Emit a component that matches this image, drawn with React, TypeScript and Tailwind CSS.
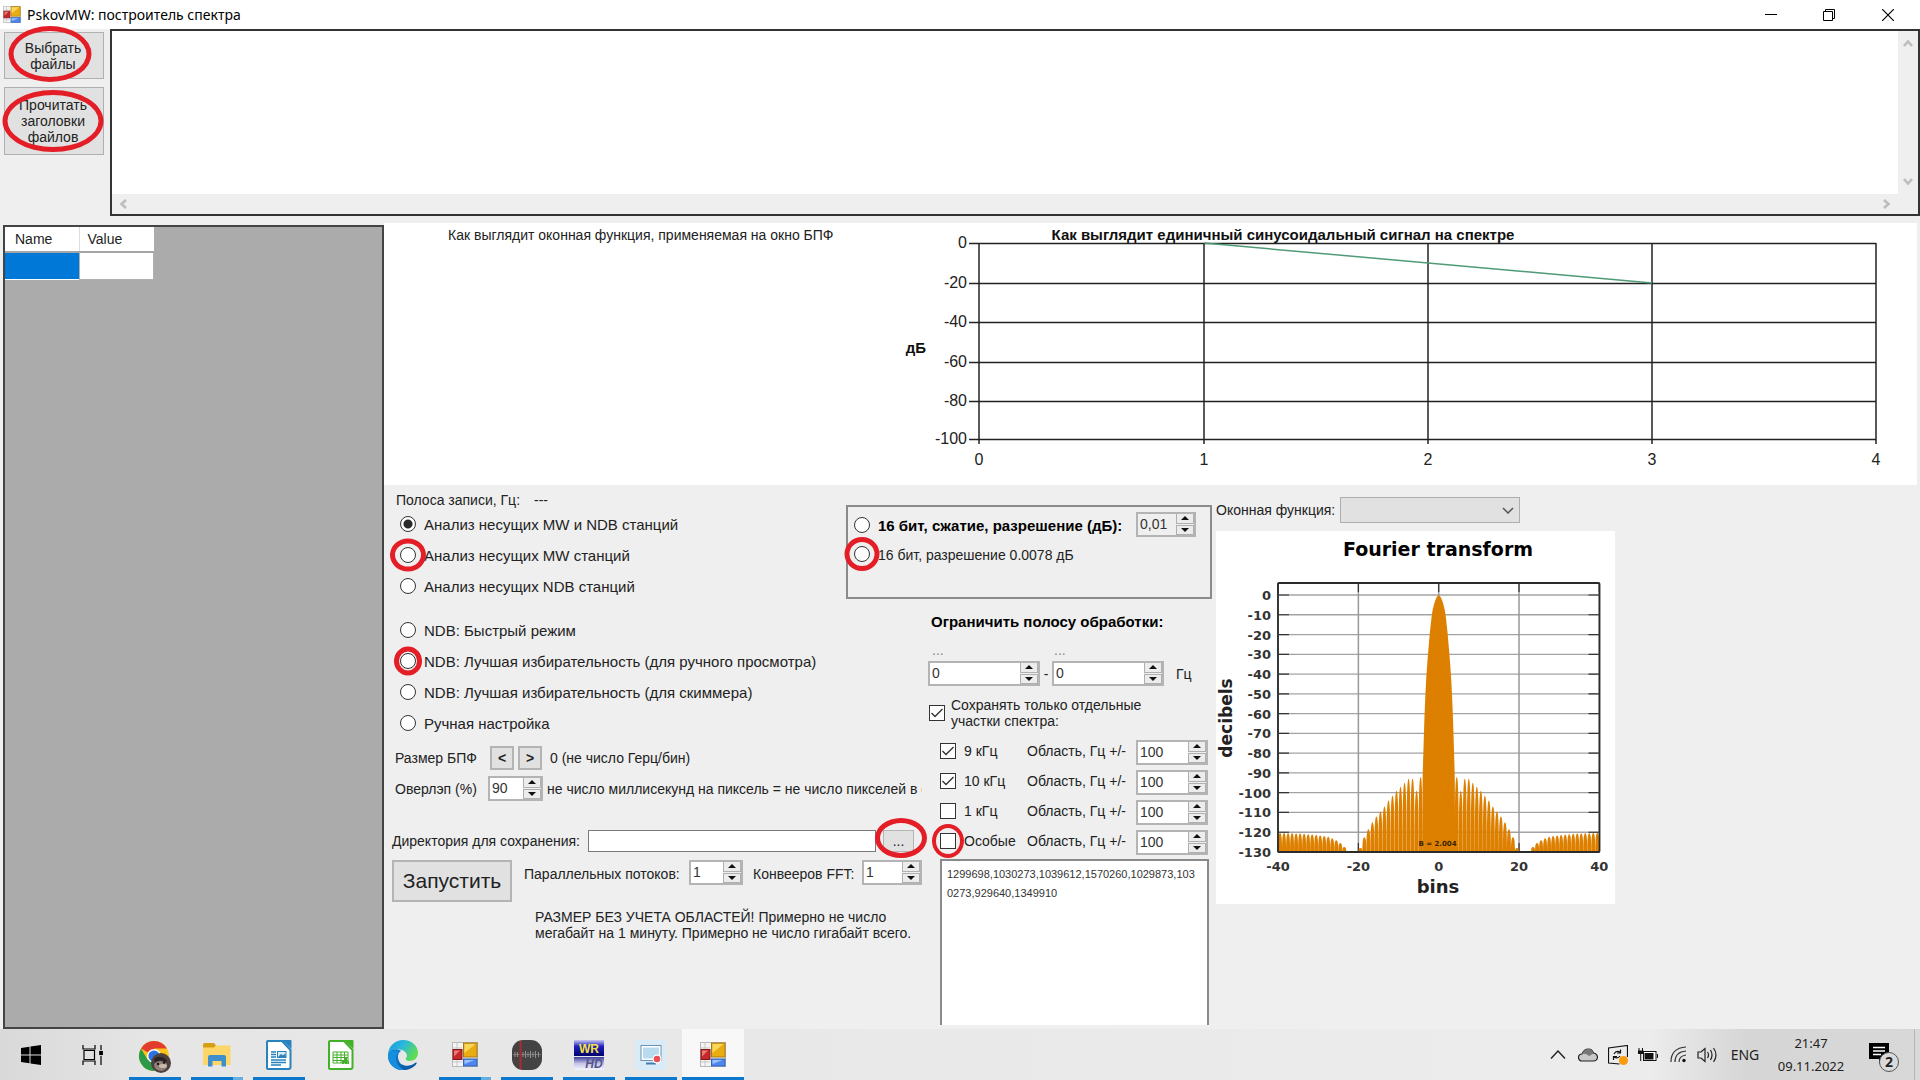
import React from "react";

const UI = "font-['Liberation_Sans',Arial,sans-serif]";

function Ring({ size }: { size: string }) {
  return (
    <span
      aria-hidden="true"
      className={`pointer-events-none absolute left-1/2 top-1/2 z-10 -translate-x-1/2 -translate-y-1/2 rounded-[50%] border-[#e41e26] ${size}`}
    />
  );
}

function FormsIcon({ className }: { className: string }) {
  return (
    <svg viewBox="0 0 26 25" className={className} aria-hidden="true">
      <rect x="0.5" y="0.5" width="25" height="24" fill="#f4f4f4" stroke="#b9b9b9" />
      <path d="M5 1v6M1 6h9M5 18v6M1 20h9" stroke="#c9c9c9" />
      <rect x="11.5" y="1" width="13.5" height="14" fill="#e9ad12" stroke="#a87b10" />
      <path d="M12.5 2h11l-11 9z" fill="#f9d75c" />
      <rect x="1" y="7.5" width="9" height="10" fill="#c6272b" stroke="#86191c" />
      <path d="M2 8.500h6l-6 6z" fill="#ea7a74" />
      <rect x="11.500" y="17" width="13.500" height="7" fill="#4d86ee" stroke="#3560b8" />
      <path d="M12.500 18h10l-10 4z" fill="#9cc2fb" />
    </svg>
  );
}

function Spinner({ value, label, width, muted }: { value: string; label: string; width: string; muted?: boolean }) {
  return (
    <div className={`flex h-[25px] shrink-0 border-2 border-[#b4b4b4] ${muted ? "bg-[#efefef]" : "bg-white"} ${width}`}>
      <input
        type="text"
        aria-label={label}
        defaultValue={value}
        className="min-w-0 flex-1 bg-transparent pb-0.5 pl-0.5 text-sm leading-4 text-[#333] outline-none"
      />
      <div className="flex w-[18px] flex-col gap-px bg-[#efefef]">
        <button aria-label={`${label}: больше`} className="flex flex-1 items-center justify-center border border-t-0 border-[#b0b0b0] bg-[#ececec]">
          <svg viewBox="0 0 8 4" className="h-1 w-2"><path d="M0 4L4 0L8 4z" fill="#111" /></svg>
        </button>
        <button aria-label={`${label}: меньше`} className="flex flex-1 items-center justify-center border border-[#b0b0b0] bg-[#ececec]">
          <svg viewBox="0 0 8 4" className="h-1 w-2"><path d="M0 0L4 4L8 0z" fill="#111" /></svg>
        </button>
      </div>
    </div>
  );
}

type RadioProps = { name: string; checked?: boolean; ring?: string; children: React.ReactNode; text?: string; height?: string };

function Radio({ name, checked, ring, children, text = "text-[15px]", height = "h-[31px]" }: RadioProps) {
  return (
    <label className={`flex items-center gap-2 ${height}`}>
      <span className="relative flex">
        <input
          type="radio"
          name={name}
          defaultChecked={checked}
          className="h-4 w-4 appearance-none rounded-full border border-[#333] bg-white checked:bg-[radial-gradient(circle,#2b2b2b_0_4px,#fff_5px)]"
        />
        {ring && <Ring size={ring} />}
      </span>
      <span className={`whitespace-nowrap pt-0.5 ${text}`}>{children}</span>
    </label>
  );
}

function Check({ checked, ring, children, gap = "gap-2" }: { checked?: boolean; ring?: string; children: React.ReactNode; gap?: string }) {
  return (
    <label className={`flex items-center ${gap}`}>
      <span className="relative flex">
        <input type="checkbox" defaultChecked={checked} className="peer h-4 w-4 appearance-none border border-[#333] bg-white" />
        <svg viewBox="0 0 16 16" className="pointer-events-none absolute inset-0 hidden h-4 w-4 peer-checked:block">
          <path d="M2.500 8L6 11.500L13.500 4" fill="none" stroke="#333" strokeWidth="1.400" />
        </svg>
        {ring && <Ring size={ring} />}
      </span>
      <span>{children}</span>
    </label>
  );
}

const GRID_Y = [20, 60, 99, 139, 178, 216];
const GRID_X = [78, 303, 527, 751, 975];

function SpectrumChart() {
  return (
    <svg viewBox="0 0 1016 262" className={`w-full ${UI}`} role="img" aria-label="Единичный синусоидальный сигнал на спектре">
      <text x="382" y="17" textAnchor="middle" fontSize="15" fontWeight="700" fill="#111">
        Как выглядит единичный синусоидальный сигнал на спектре
      </text>
      <text x="15" y="130" textAnchor="middle" fontSize="15" fontWeight="700" fill="#111">дБ</text>
      {GRID_Y.map((y, i) => (
        <g key={y}>
          <path d={`M68 ${y + 0.5}H975`} stroke="#222" strokeWidth="1.500" />
          <text x="66" y={y + 5} textAnchor="end" fontSize="16" fill="#222">{i === 0 ? "0" : `-${i * 20}`}</text>
        </g>
      ))}
      {GRID_X.map((x, i) => (
        <g key={x}>
          <path d={`M${x} 20V221`} stroke="#222" strokeWidth="1.500" />
          <text x={x} y="242" textAnchor="middle" fontSize="16" fill="#222">{i}</text>
        </g>
      ))}
      <path d="M303 20L751 60" stroke="#4f9a77" strokeWidth="1.500" />
    </svg>
  );
}

const LOBES: [number, number][] = [
  [4.5, -92], [5.5, -99], [6.5, -93], [7.5, -93], [8.5, -95], [9.5, -97], [10.5, -99], [11.5, -101.5], [12.5, -104],
  [13.5, -107], [14.5, -109.5], [15.5, -112], [16.5, -115], [17.5, -118.5], [18.5, -122.5], [19.5, -128],
  [23.5, -127.5], [24.5, -125.5], [25.5, -124], [26.5, -123], [27.5, -122.3], [28.5, -121.900], [29.5, -121.600],
  [30.5, -121.400], [31.5, -121.200], [32.500, -121], [33.500, -120.800], [34.500, -120.700], [35.500, -120.600],
  [36.500, -120.500], [37.500, -120.500], [38.500, -120.400], [39.500, -120.400],
];
const MAIN: [number, number][] = [
  [0, 0], [0.5, -1], [1, -3.500], [1.500, -7.500], [1.800, -11.500], [2.200, -19], [2.750, -32], [3.100, -42], [3.350, -52],
  [3.600, -65], [3.800, -78], [4, -92], [4.100, -130],
];
const bx = (b: number) => 222.700 + b * 4.016;
const dy = (d: number) => 64 - d * 1.977;

function lobePath(c: number, top: number) {
  const l = bx(c - 0.5), m = bx(c), r = bx(c + 0.5), b = dy(-130), t = dy(top);
  const k = t + (b - t) * 0.35;
  return `M${l} ${b}C${l} ${k} ${m - 1.500} ${t} ${m} ${t}C${m + 1.500} ${t} ${r} ${k} ${r} ${b}z`;
}

function FourierChart() {
  const dbs = Array.from({ length: 14 }, (_, i) => -10 * i);
  const side = [...MAIN].reverse().map(([b, d]) => `${bx(-b)},${dy(d)}`);
  const points = [...side, ...MAIN.map(([b, d]) => `${bx(b)},${dy(d)}`)].join(" ");
  return (
    <svg viewBox="0 0 399 373" className="w-[399px] bg-white font-['DejaVu_Sans',sans-serif] font-bold" role="img" aria-label="Fourier transform">
      <text x="222" y="25" textAnchor="middle" fontSize="19" fill="#000">Fourier transform</text>
      <text x="222" y="362" textAnchor="middle" fontSize="18" fill="#222">bins</text>
      <text transform="translate(16 187) rotate(-90)" textAnchor="middle" fontSize="17" fill="#222">decibels</text>
      {dbs.map((d) => (
        <g key={d}>
          <path d={`M62 ${dy(d)}H383.500`} stroke="#a3a3a3" strokeWidth="1.300" />
          <path d={`M62 ${dy(d)}h11M383.500 ${dy(d)}h-11`} stroke="#333" strokeWidth="1.200" />
          <text x="55" y={dy(d) + 5} textAnchor="end" fontSize="13" fill="#333">{d}</text>
        </g>
      ))}
      {[-40, -20, 0, 20, 40].map((b) => (
        <g key={b}>
          <path d={`M${bx(b)} 52V321`} stroke="#999" strokeWidth="1.500" />
          <path d={`M${bx(b)} 52v9M${bx(b)} 321v-9`} stroke="#333" strokeWidth="1.200" />
          <text x={bx(b)} y="340" textAnchor="middle" fontSize="13" fill="#333">{b}</text>
        </g>
      ))}
      <polygon points={points} fill="#dd8000" />
      {LOBES.map(([c, t]) => (
        <path key={c} d={lobePath(c, t) + lobePath(-c, t)} fill="#dd8000" />
      ))}
      <rect x="62" y="52" width="321.500" height="269" fill="none" stroke="#2b2b2b" strokeWidth="1.800" rx="1" />
      <text x="221.500" y="315" textAnchor="middle" fontSize="7" fill="#3c2400">B = 2.004</text>
    </svg>
  );
}

const BANDS = [
  { name: "9 кГц", checked: true },
  { name: "10 кГц", checked: true },
  { name: "1 кГц", checked: false },
  { name: "Особые", checked: false, ring: "h-[34px] w-8 border-4" },
];

function Task({ label, children, bar, active }: { label: string; children: React.ReactNode; bar?: "one" | "many"; active?: boolean }) {
  return (
    <button aria-label={label} className={`relative flex h-full w-[62px] items-center justify-center ${active ? "bg-[#f8f8f8]" : ""}`}>
      {children}
      {bar && (
        <span className={`absolute bottom-0 flex h-[3px] ${active ? "inset-x-0" : "inset-x-[5px]"}`}>
          <span className="flex-1 bg-[#0b78cf]" />
          {bar === "many" && <span className="w-2.5 bg-[#69aee2]" />}
        </span>
      )}
    </button>
  );
}

function DocIcon({ color, sheet }: { color: string; sheet?: boolean }) {
  return (
    <svg viewBox="0 0 26 30" className="h-[30px] w-[26px]">
      <path d="M2 1h14l8.500 9v17a2 2 0 0 1-2 2H2a1 1 0 0 1-1-1V2a1 1 0 0 1 1-1z" fill="#fff" stroke={color} strokeWidth="2" />
      <path d="M16 0h8.500a1 1 0 0 1 1 1v8z" fill={color} />
      {sheet ? (
        <g>
          <path d="M5 12h15v11H5zM5 15h15M5 17.500h15M5 20.500h15M9 12v11M13 12v11M16.500 12v11" fill="none" stroke={color} strokeWidth="1" />
          <path d="M14 24v-4h2v4zM17 24v-6h2v6zM19.500 24v-3h1.500v3z" fill={color} />
        </g>
      ) : (
        <g>
          <path d="M5 12h5M5 14.500h5M5 17h5M5 20h15M5 22.500h15M5 25h10" stroke={color} strokeWidth="1.300" />
          <rect x="11.500" y="11.500" width="8.500" height="6" fill="#d5ecfa" stroke={color} />
          <path d="M12 17l3-3 2 1.500 2-2 1 3.500z" fill={color} />
        </g>
      )}
    </svg>
  );
}

function Taskbar() {
  return (
    <footer className="flex h-[51px] items-stretch bg-[linear-gradient(90deg,#d9d9d9,#e6e6e6_8%,#e8e8e8_38%,#ececec_80%,#ececec_86%,#d6d6d6_91%,#d8d8d8)] font-['Noto_Sans',sans-serif] text-[#222]">
      <Task label="Пуск">
        <svg viewBox="0 0 20 20" className="h-5 w-5" fill="#000"><path d="M0 3l8.500-1.300v7.800H0zM9.500 1.500L20 0v9.500H9.500zM0 10.500h8.500v7.800L0 17zM9.500 10.500H20V20L9.500 18.500z" /></svg>
      </Task>
      <Task label="Представление задач">
        <svg viewBox="0 0 22 20" className="h-5 w-[22px]" fill="none" stroke="#000" strokeWidth="1.200"><path d="M1 0v4h12V0M1 20v-4h12v4M2 5.500h10.500v9H2zM19 0v5M19 11v9" /><rect x="17.800" y="6.500" width="2.500" height="3" fill="#000" /></svg>
      </Task>
      <Task label="Google Chrome" bar="one">
        <svg viewBox="0 0 34 34" className="mt-1 h-[34px] w-[34px]">
          <circle cx="16" cy="16" r="15" fill="#fbc31b" />
          <path d="M16 16L3 8.500A15 15 0 0 1 29 8.500H16z" fill="#e33b2e" />
          <path d="M3 8.500A15 15 0 0 0 16 31l6.500-11.500L16 16l-6.500 3.500z" fill="#2b9a47" />
          <circle cx="16" cy="16" r="7" fill="#fff" /><circle cx="16" cy="16" r="5.600" fill="#2a74e0" />
          <circle cx="23" cy="23" r="10" fill="#4b423f" />
          <path d="M16 24q6-6 13 0q1 5-5 7q-8 0-8-7z" fill="#8f8078" />
          <path d="M16 19q6-5 13 1l-1 2q-6-3-11 0z" fill="#2a2220" />
          <ellipse cx="25" cy="26" rx="4" ry="2" fill="#c9b9ae" /><circle cx="20" cy="24" r="1.200" fill="#211" /><circle cx="26" cy="22.500" r="1.200" fill="#211" />
        </svg>
      </Task>
      <Task label="Проводник" bar="many">
        <svg viewBox="0 0 28 24" className="h-6 w-7">
          <path d="M0 1.500Q0 0 1.500 0H11l2 2.500-2 2.500H0z" fill="#d69e14" /><path d="M13 2.500h14.500V22H0V4.500h11z" fill="#fcd667" />
          <path d="M5 23.500V14q0-2 2-2h14q2 0 2 2v9.500h-4.500V18h-9v5.500z" fill="#3f8fce" />
        </svg>
      </Task>
      <Task label="LibreOffice Writer" bar="one"><DocIcon color="#2782bd" /></Task>
      <Task label="LibreOffice Calc"><DocIcon color="#43b02a" sheet /></Task>
      <Task label="Microsoft Edge">
        <svg viewBox="0 0 30 30" className="h-[30px] w-[30px]">
          <defs>
            <linearGradient id="edgeTop" x1="0" y1="0" x2="1" y2="0.500"><stop offset="0" stopColor="#1797dc" /><stop offset="0.500" stopColor="#2ab8dd" /><stop offset="1" stopColor="#60dc52" /></linearGradient>
            <linearGradient id="edgeLow" x1="0" y1="0" x2="1" y2="1"><stop offset="0" stopColor="#1187d8" /><stop offset="1" stopColor="#0c4f97" /></linearGradient>
          </defs>
          <path d="M0 14C1 5 8 0 15 0c9 0 15 6 15 13 0 5-4 8-8 8-3 0-5-1-4-3 2-2 1-6-4-8C8 8 2 10 0 14z" fill="url(#edgeTop)" />
          <path d="M0 14c2-5 9-6 13-3-4 2-4 9 0 13 5 3 10 2 14-1 2-1 2 0 1 1.500C25 28 21 30 15 30 6 30-1 23 0 14z" fill="url(#edgeLow)" />
          <path d="M11 12c-5 4-4 13 5 18C8 31 0 24 0 15c2-5 7-5 11-3z" fill="#148fe0" />
        </svg>
      </Task>
      <Task label="PskovMW" bar="many"><FormsIcon className="h-[25px] w-[26px]" /></Task>
      <Task label="Запись звука" bar="one">
        <svg viewBox="0 0 30 30" className="h-[30px] w-[30px]">
          <rect width="30" height="30" rx="11" fill="#434343" />
          <path d="M1 14.500h28" stroke="#777" /><path d="M3 12v5M5.500 12v5M11 12v5M13.500 11v7M16 12v5M18.500 11v7M21 12v5M23.500 11v7M26.500 12v5" stroke="#909090" />
          <path d="M8.500 1v28" stroke="#b3282d" strokeWidth="2" />
        </svg>
      </Task>
      <Task label="WRHD" bar="one">
        <svg viewBox="0 0 30 30" className="h-[30px] w-[30px] overflow-visible font-['Liberation_Sans',sans-serif] font-bold">
          <defs>
            <linearGradient id="wr" x1="0" y1="0" x2="0" y2="1"><stop offset="0" stopColor="#c8c8f0" /><stop offset="0.400" stopColor="#2020c0" /><stop offset="1" stopColor="#00006c" /></linearGradient>
            <linearGradient id="hd" x1="0" y1="0" x2="0" y2="1"><stop offset="0" stopColor="#3c3c9c" /><stop offset="0.500" stopColor="#c4c4e6" /><stop offset="1" stopColor="#f6f6ff" /></linearGradient>
          </defs>
          <rect width="30" height="16" fill="url(#wr)" /><rect y="17" width="30" height="13" fill="url(#hd)" />
          <text x="15" y="13" fontSize="12" textAnchor="middle" fill="#f4e23a">WR</text>
          <text x="20" y="28" fontSize="12" textAnchor="middle" fontStyle="italic" fill="#55558a">HD</text>
        </svg>
      </Task>
      <Task label="Запись экрана" bar="one">
        <svg viewBox="0 0 30 30" className="h-[30px] w-[30px]">
          <rect width="30" height="30" fill="#d9ebf7" /><rect x="5" y="5.500" width="20" height="15" fill="#fff" stroke="#6a92b0" /><rect x="7" y="7.500" width="16" height="11" fill="#b9dbef" />
          <path d="M10 23.500h10" stroke="#3f7fae" strokeWidth="2" /><circle cx="21" cy="19" r="4.500" fill="#fff" /><circle cx="21" cy="19" r="3.300" fill="#ea4f55" />
        </svg>
      </Task>
      <Task label="PskovMW: построитель спектра" bar="one" active><FormsIcon className="h-[25px] w-[26px]" /></Task>

      <div className="ml-auto flex items-center">
        <button aria-label="Скрытые значки" className="mr-3"><svg viewBox="0 0 16 9" className="h-[9px] w-4" fill="none" stroke="#222" strokeWidth="1.400"><path d="M1 8.500L8 1l7 7.500" /></svg></button>
        <button aria-label="OneDrive" className="mr-2.5"><svg viewBox="0 0 20 14" className="h-3.5 w-5"><path d="M4 13a3.500 3.500 0 0 1 0-7Q6 1 10.500 1 14 1 15.500 5 19.500 6 19.500 9.500 19 13 15.500 13z" fill="#c9c9c9" stroke="#222" strokeWidth="1.200" /><path d="M4 6Q6 1 10.500 1q4 0 5 4.500L11 8q-3-3-7-2z" fill="#777" /></svg></button>
        <button aria-label="Обновление" className="mr-2.5"><svg viewBox="0 0 20 20" className="h-5 w-5" fill="none" stroke="#111" strokeWidth="1.200"><path d="M19.500 12V.500L.500 3v15l11 1M6 9q2-4 6-2M12.500 4.500V8H9M12 11q-2 3-6 1M5.500 15v-3.500H9" /><circle cx="15.500" cy="15.500" r="4.500" fill="#fb9a0b" stroke="none" /></svg></button>
        <button aria-label="Батарея" className="mr-3"><svg viewBox="0 0 20 14" className="h-3.5 w-5"><path d="M1 0v3M4.500 0v3M0 3h5.500v2.500H0zM2.700 5v8" fill="#111" stroke="#111" /><rect x="5.500" y="3.500" width="12.500" height="9" fill="#fff" stroke="#111" /><rect x="6.500" y="5" width="9" height="6.500" fill="#111" /><path d="M19.500 6v4" stroke="#111" /></svg></button>
        <button aria-label="Wi-Fi" className="mr-2.5"><svg viewBox="0 0 17 17" className="h-[17px] w-[17px]" fill="none" stroke="#333" strokeWidth="1.200"><path d="M1 16Q1 2 16 1M5 16Q5 6 16 5M9 16q0-6 7-7" /><circle cx="14" cy="14.500" r="1.700" fill="#111" stroke="none" /></svg></button>
        <button aria-label="Громкость" className="mr-3"><svg viewBox="0 0 21 18" className="h-[18px] w-[21px]" fill="none" stroke="#222" strokeWidth="1.200"><path d="M1 6h3l4-3.500v13L4 12H1zM10.500 6q2 3 0 6M13.500 4q3 5 0 10M16.500 2q5 7 0 14" /></svg></button>
        <button className="mr-3.5 w-[30px] text-sm">ENG</button>
        <button className="mr-5 w-[74px] whitespace-nowrap text-center text-[13px] leading-[23px]">21:47<br />09.11.2022</button>
        <button aria-label="Уведомления: 2" className="relative mr-3.5 h-9 w-8">
          <svg viewBox="0 0 32 36" className="h-9 w-8"><path d="M1 6h20v16h-6l-4 5v-5H1z" fill="#000" /><path d="M5 10.500h12M5 14h12M5 17.500h8" stroke="#fff" strokeWidth="1.300" /><circle cx="21" cy="25" r="9.500" fill="#dadada" stroke="#555" /></svg>
          <span className="absolute left-[11px] top-[15px] w-5 text-center text-sm font-bold leading-5">2</span>
        </button>
        <span className="h-full w-1.5 border-l border-[#b5b5b5]" />
      </div>
    </footer>
  );
}

export default function App() {
  return (
    <div className={`flex min-h-screen flex-col overflow-hidden bg-[#efefef] text-sm text-[#222] ${UI}`}>
      <header className="flex h-[29px] items-center bg-white pl-[3px] font-['Noto_Sans',sans-serif] text-black">
        <FormsIcon className="h-[17px] w-[18px]" />
        <h1 className="ml-1.5 text-sm">PskovMW: построитель спектра</h1>
        <div className="ml-auto mr-0.5 flex h-full">
          <button aria-label="Свернуть" className="flex w-[58px] items-center justify-center"><svg viewBox="0 0 12 12" className="h-3 w-3" stroke="#000"><path d="M0 5.500h12" /></svg></button>
          <button aria-label="Восстановить" className="flex w-[58px] items-center justify-center"><svg viewBox="0 0 12 12" className="h-3 w-3" fill="none" stroke="#000"><path d="M.500 2.500h9v9h-9zM2.500 2.500v-2h9v9h-2" /></svg></button>
          <button aria-label="Закрыть" className="flex w-[60px] items-center justify-center"><svg viewBox="0 0 12 12" className="h-3 w-3" stroke="#000" strokeWidth="1.200"><path d="M0 0l12 12M12 0L0 12" /></svg></button>
        </div>
      </header>

      <section className="flex h-[187px]">
        <div className="flex w-[110px] flex-col items-start gap-2 pl-1 pt-[3px]">
          <button className="relative h-[47px] w-[100px] border border-[#b0b0b0] bg-[#e1e1e1] pr-0.5 leading-4">
            Выбрать<br />файлы
            <Ring size="h-14 w-[83px] -ml-1 -mt-0.5 border-[5px]" />
          </button>
          <button className="relative h-[68px] w-[100px] border border-[#b0b0b0] bg-[#e1e1e1] pr-0.5 leading-4">
            Прочитать<br />заголовки<br />файлов
            <Ring size="-ml-px h-[62px] w-[101px] border-[5px]" />
          </button>
        </div>
        <div className="grid min-w-0 flex-1 grid-cols-[1fr_20px] grid-rows-[1fr_20px] border-2 border-[#333] bg-[#efefef]">
          <textarea aria-label="Файлы" className="resize-none bg-white outline-none" />
          <div className="flex flex-col items-center justify-between py-2">
            <svg viewBox="0 0 10 8" className="h-2 w-2.5" fill="none" stroke="#bcbcbc" strokeWidth="2.500"><path d="M1 7l4-4.500L9 7" /></svg>
            <svg viewBox="0 0 10 8" className="h-2 w-2.5" fill="none" stroke="#bcbcbc" strokeWidth="2.500"><path d="M1 1l4 4.500L9 1" /></svg>
          </div>
          <div className="flex items-center justify-between px-[7px]">
            <svg viewBox="0 0 8 10" className="h-2.5 w-2" fill="none" stroke="#bcbcbc" strokeWidth="2.500"><path d="M7 1L2.500 5L7 9" /></svg>
            <svg viewBox="0 0 8 10" className="h-2.5 w-2" fill="none" stroke="#bcbcbc" strokeWidth="2.500"><path d="M1 1l4.500 4L1 9" /></svg>
          </div>
        </div>
      </section>

      <main className="flex flex-1 px-[3px]">
        <aside className="mt-[9px] w-[381px] shrink-0 border-2 border-[#444] bg-[#ababab]">
          <table className="border-collapse bg-white text-left">
            <thead>
              <tr className="h-[25px] border-b-2 border-[#a5a5a5]">
                <th className="w-[74px] border-r border-[#ddd] pl-2.5 font-normal">Name</th>
                <th className="w-[74px] pl-2 font-normal">Value</th>
              </tr>
            </thead>
            <tbody>
              <tr className="h-[27px]">
                <td className="bg-[#0078d7]" />
                <td className="border border-[#b0b0b0]" />
              </tr>
            </tbody>
          </table>
        </aside>

        <div className="flex min-w-0 flex-1 flex-col pt-[7px]">
          <div className="flex bg-white">
            <p className="w-[517px] shrink-0 pl-16 pt-0.5">Как выглядит оконная функция, применяемая на окно БПФ</p>
            <div className="min-w-0 flex-1"><SpectrumChart /></div>
          </div>

          <div className="flex flex-1">
            <div className="flex w-[829px] shrink-0 flex-col">
              <div className="flex h-[129px] justify-between pr-px">
                <div className="pl-4">
                  <p className="-ml-1 flex h-[23px] gap-3.5 pt-[5px]"><span>Полоса записи, Гц:</span><span>---</span></p>
                  <Radio name="mode" checked>Анализ несущих MW и NDB станций</Radio>
                  <Radio name="mode" ring="h-[33px] w-9 border-[5px]">Анализ несущих MW станций</Radio>
                  <Radio name="mode">Анализ несущих NDB станций</Radio>
                </div>
                <div className="mt-5 flex h-[94px] w-[366px] flex-col border-2 border-[#8a8a8a] pl-1.5 pt-[3px]">
                  <div className="flex items-center justify-between pr-3.5">
                    <Radio name="bits" height="h-[29px]" text="text-[15px] font-bold text-black">16 бит, сжатие, разрешение (дБ):</Radio>
                    <Spinner value="0,01" label="Разрешение, дБ" width="w-[60px]" muted />
                  </div>
                  <Radio name="bits" height="h-[29px]" ring="h-[34px] w-[35px] border-[5px]" text="text-sm">16 бит, разрешение 0.0078 дБ</Radio>
                </div>
              </div>

              <div className="flex flex-1 justify-between">
                <div className="w-[538px] pl-2">
                  <div className="pl-2">
                    <Radio name="ndb">NDB: Быстрый режим</Radio>
                    <Radio name="ndb" ring="h-[29px] w-7 border-[5px]">NDB: Лучшая избирательность (для ручного просмотра)</Radio>
                    <Radio name="ndb">NDB: Лучшая избирательность (для скиммера)</Radio>
                    <Radio name="ndb">Ручная настройка</Radio>
                  </div>
                  <div className="mt-1 flex h-[31px] items-center">
                    <span className="w-[98px] pl-[3px]">Размер БПФ</span>
                    <button className="mr-1 h-6 w-6 border-2 border-[#b4b4b4] bg-[#e1e1e1] text-sm font-bold leading-5">&lt;</button>
                    <button className="h-6 w-6 border-2 border-[#b4b4b4] bg-[#e1e1e1] text-sm font-bold leading-5">&gt;</button>
                    <span className="ml-2">0 (не число Герц/бин)</span>
                  </div>
                  <div className="flex h-[31px] items-center">
                    <span className="w-24 shrink-0 pl-[3px]">Оверлэп (%)</span>
                    <Spinner value="90" label="Оверлэп" width="w-[55px]" />
                    <span className="ml-1 min-w-0 overflow-hidden whitespace-nowrap">не число миллисекунд на пиксель = не число пикселей в секунду</span>
                  </div>
                  <div className="mt-[25px] flex h-6 items-center">
                    <label htmlFor="dir" className="w-[196px] shrink-0 whitespace-nowrap">Директория для сохранения:</label>
                    <input id="dir" className="h-[22px] w-[288px] shrink-0 border border-[#7a7a7a] bg-white px-1 outline-none" />
                    <span className="relative ml-[7px] shrink-0">
                      <button className="block h-[22px] w-[31px] border border-[#b4b4b4] bg-[#e1e1e1] leading-4">...</button>
                      <Ring size="ml-0.5 -mt-[3px] h-10 w-[52px] border-[5px]" />
                    </span>
                  </div>
                  <div className="mt-[7px] flex h-[42px]">
                    <button className="h-[42px] w-[120px] border-2 border-[#b4b4b4] bg-[#e1e1e1] text-[21px]">Запустить</button>
                    <span className="ml-3 mt-1 w-[165px]">Параллельных потоков:</span>
                    <Spinner value="1" label="Параллельных потоков" width="w-[54px]" />
                    <span className="ml-2.5 mt-1 w-[109px]">Конвееров FFT:</span>
                    <Spinner value="1" label="Конвееров FFT" width="w-[60px]" />
                  </div>
                  <p className="mt-[7px] whitespace-nowrap pl-[143px] leading-4">
                    РАЗМЕР БЕЗ УЧЕТА ОБЛАСТЕЙ! Примерно не число<br />мегабайт на 1 минуту. Примерно не число гигабайт всего.
                  </p>
                </div>

                <div className="flex w-[287px] flex-col pl-0.5 pr-1">
                  <h2 className="h-4 pl-[3px] text-[15px] font-bold leading-4 text-black">Ограничить полосу обработки:</h2>
                  <div className="mt-3.5 flex h-[17px] pl-1 leading-3 text-[#888]"><span className="w-[122px]">...</span><span>...</span></div>
                  <div className="flex items-center">
                    <Spinner value="0" label="Нижняя граница" width="w-28" />
                    <span className="w-3 text-center">-</span>
                    <Spinner value="0" label="Верхняя граница" width="w-28" />
                    <span className="ml-3">Гц</span>
                  </div>
                  <div className="mb-[7px] mt-[11px] pl-px leading-4"><Check checked gap="gap-1.5"><>Сохранять только отдельные<br />участки спектра:</></Check></div>
                  {BANDS.map((b) => (
                    <div key={b.name} className="flex h-[30px] items-center pl-3">
                      <div className="w-[87px]"><Check checked={b.checked} ring={b.ring}>{b.name}</Check></div>
                      <span className="w-[109px]">Область, Гц +/-</span>
                      <div className="pt-[3px]"><Spinner value="100" label={`Область ${b.name}`} width="w-[72px]" /></div>
                    </div>
                  ))}
                  <textarea
                    aria-label="Особые частоты"
                    defaultValue="1299698,1030273,1039612,1570260,1029873,1030273,929640,1349910"
                    className="mb-1 ml-3 mt-[3px] min-h-[165px] flex-1 resize-none break-all border-2 border-b-0 border-[#8a8a8a] bg-white py-1 pl-[5px] pr-2.5 text-[11px] leading-[19px] text-[#333] outline-none"
                  />
                </div>
              </div>
            </div>

            <div className="min-w-0 flex-1 pl-[3px] pt-3">
              <div className="mb-2 flex items-center">
                <label htmlFor="win" className="w-[124px] whitespace-nowrap">Оконная функция:</label>
                <span className="relative">
                  <select id="win" className="block h-[26px] w-[180px] appearance-none border border-[#adadad] bg-[#e1e1e1]"><option></option></select>
                  <svg viewBox="0 0 12 7" className="pointer-events-none absolute right-1.5 top-2.5 h-[7px] w-3" fill="none" stroke="#555" strokeWidth="1.500"><path d="M1 1l5 5 5-5" /></svg>
                </span>
              </div>
              <FourierChart />
            </div>
          </div>
        </div>
      </main>
      <Taskbar />
    </div>
  );
}
